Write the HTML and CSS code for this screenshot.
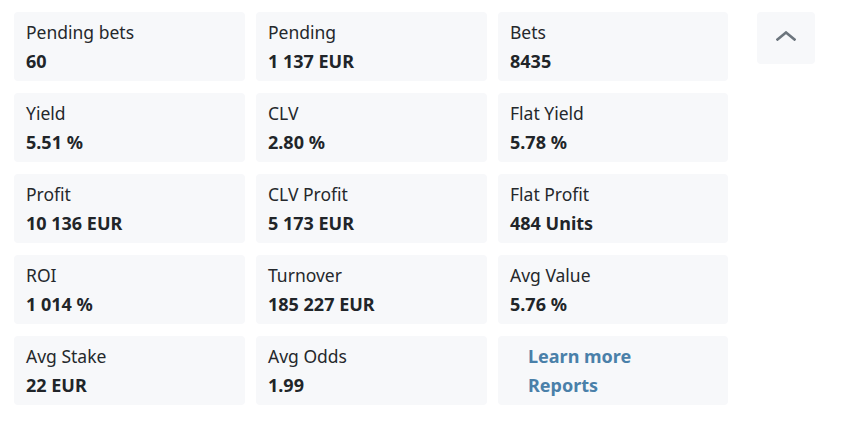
FILE: index.html
```html
<!DOCTYPE html>
<html>
<head>
<meta charset="utf-8">
<link rel="stylesheet" href="styles.css">
</head>
<body>
<div class="wrap">
  <div class="grid">
    <div class="card"><div class="label">Pending bets</div><div class="value">60</div></div>
    <div class="card"><div class="label">Pending</div><div class="value">1 137 EUR</div></div>
    <div class="card"><div class="label">Bets</div><div class="value">8435</div></div>
    <div class="card"><div class="label">Yield</div><div class="value">5.51 %</div></div>
    <div class="card"><div class="label">CLV</div><div class="value">2.80 %</div></div>
    <div class="card"><div class="label">Flat Yield</div><div class="value">5.78 %</div></div>
    <div class="card"><div class="label">Profit</div><div class="value">10 136 EUR</div></div>
    <div class="card"><div class="label">CLV Profit</div><div class="value">5 173 EUR</div></div>
    <div class="card"><div class="label">Flat Profit</div><div class="value">484 Units</div></div>
    <div class="card"><div class="label">ROI</div><div class="value">1 014 %</div></div>
    <div class="card"><div class="label">Turnover</div><div class="value">185 227 EUR</div></div>
    <div class="card"><div class="label">Avg Value</div><div class="value">5.76 %</div></div>
    <div class="card"><div class="label">Avg Stake</div><div class="value">22 EUR</div></div>
    <div class="card"><div class="label">Avg Odds</div><div class="value">1.99</div></div>
    <div class="card">
      <ul class="links">
        <li><a href="#">Learn more</a></li>
        <li><a href="#">Reports</a></li>
      </ul>
    </div>
  </div>
  <button class="toggle" aria-label="Collapse">
    <svg width="20" height="10" viewBox="0 0 20 10"><path d="M1.5 8.5 L10 1.5 L18.5 8.5" fill="none" stroke="#6c757d" stroke-width="2.6" stroke-linecap="square"/></svg>
  </button>
</div>
</body>
</html>
```
FILE: styles.css
```css
body {
  margin: 0;
  background: #fff;
  font-family: "Noto Sans", "Open Sans", sans-serif;
  color: #212529;
}
.wrap {
  display: flex;
  align-items: flex-start;
  gap: 29px;
  padding: 12px 14px;
}
.grid {
  display: grid;
  grid-template-columns: 231px 231px 230px;
  column-gap: 11px;
  row-gap: 12px;
}
.card {
  background: #f7f8fa;
  border-radius: 4px;
  height: 69px;
  box-sizing: border-box;
  padding: 6px 12px 0;
}
.label {
  font-size: 17.5px;
  line-height: 29px;
  font-weight: 400;
  color: #25282c;
}
.value {
  font-size: 18px;
  line-height: 29px;
  font-weight: 700;
}
.links {
  list-style: none;
  margin: 0;
  padding: 0 0 0 18px;
}
.links li {
  font-size: 18px;
  line-height: 29px;
}
.links a {
  color: #4a80a9;
  font-weight: 700;
  text-decoration: none;
}
.toggle {
  width: 58px;
  height: 52px;
  border: none;
  border-radius: 4px;
  background: #f7f8fa;
  display: flex;
  align-items: center;
  justify-content: center;
  padding: 0;
}
.toggle svg { display: block; margin-top: -4px; }
```
